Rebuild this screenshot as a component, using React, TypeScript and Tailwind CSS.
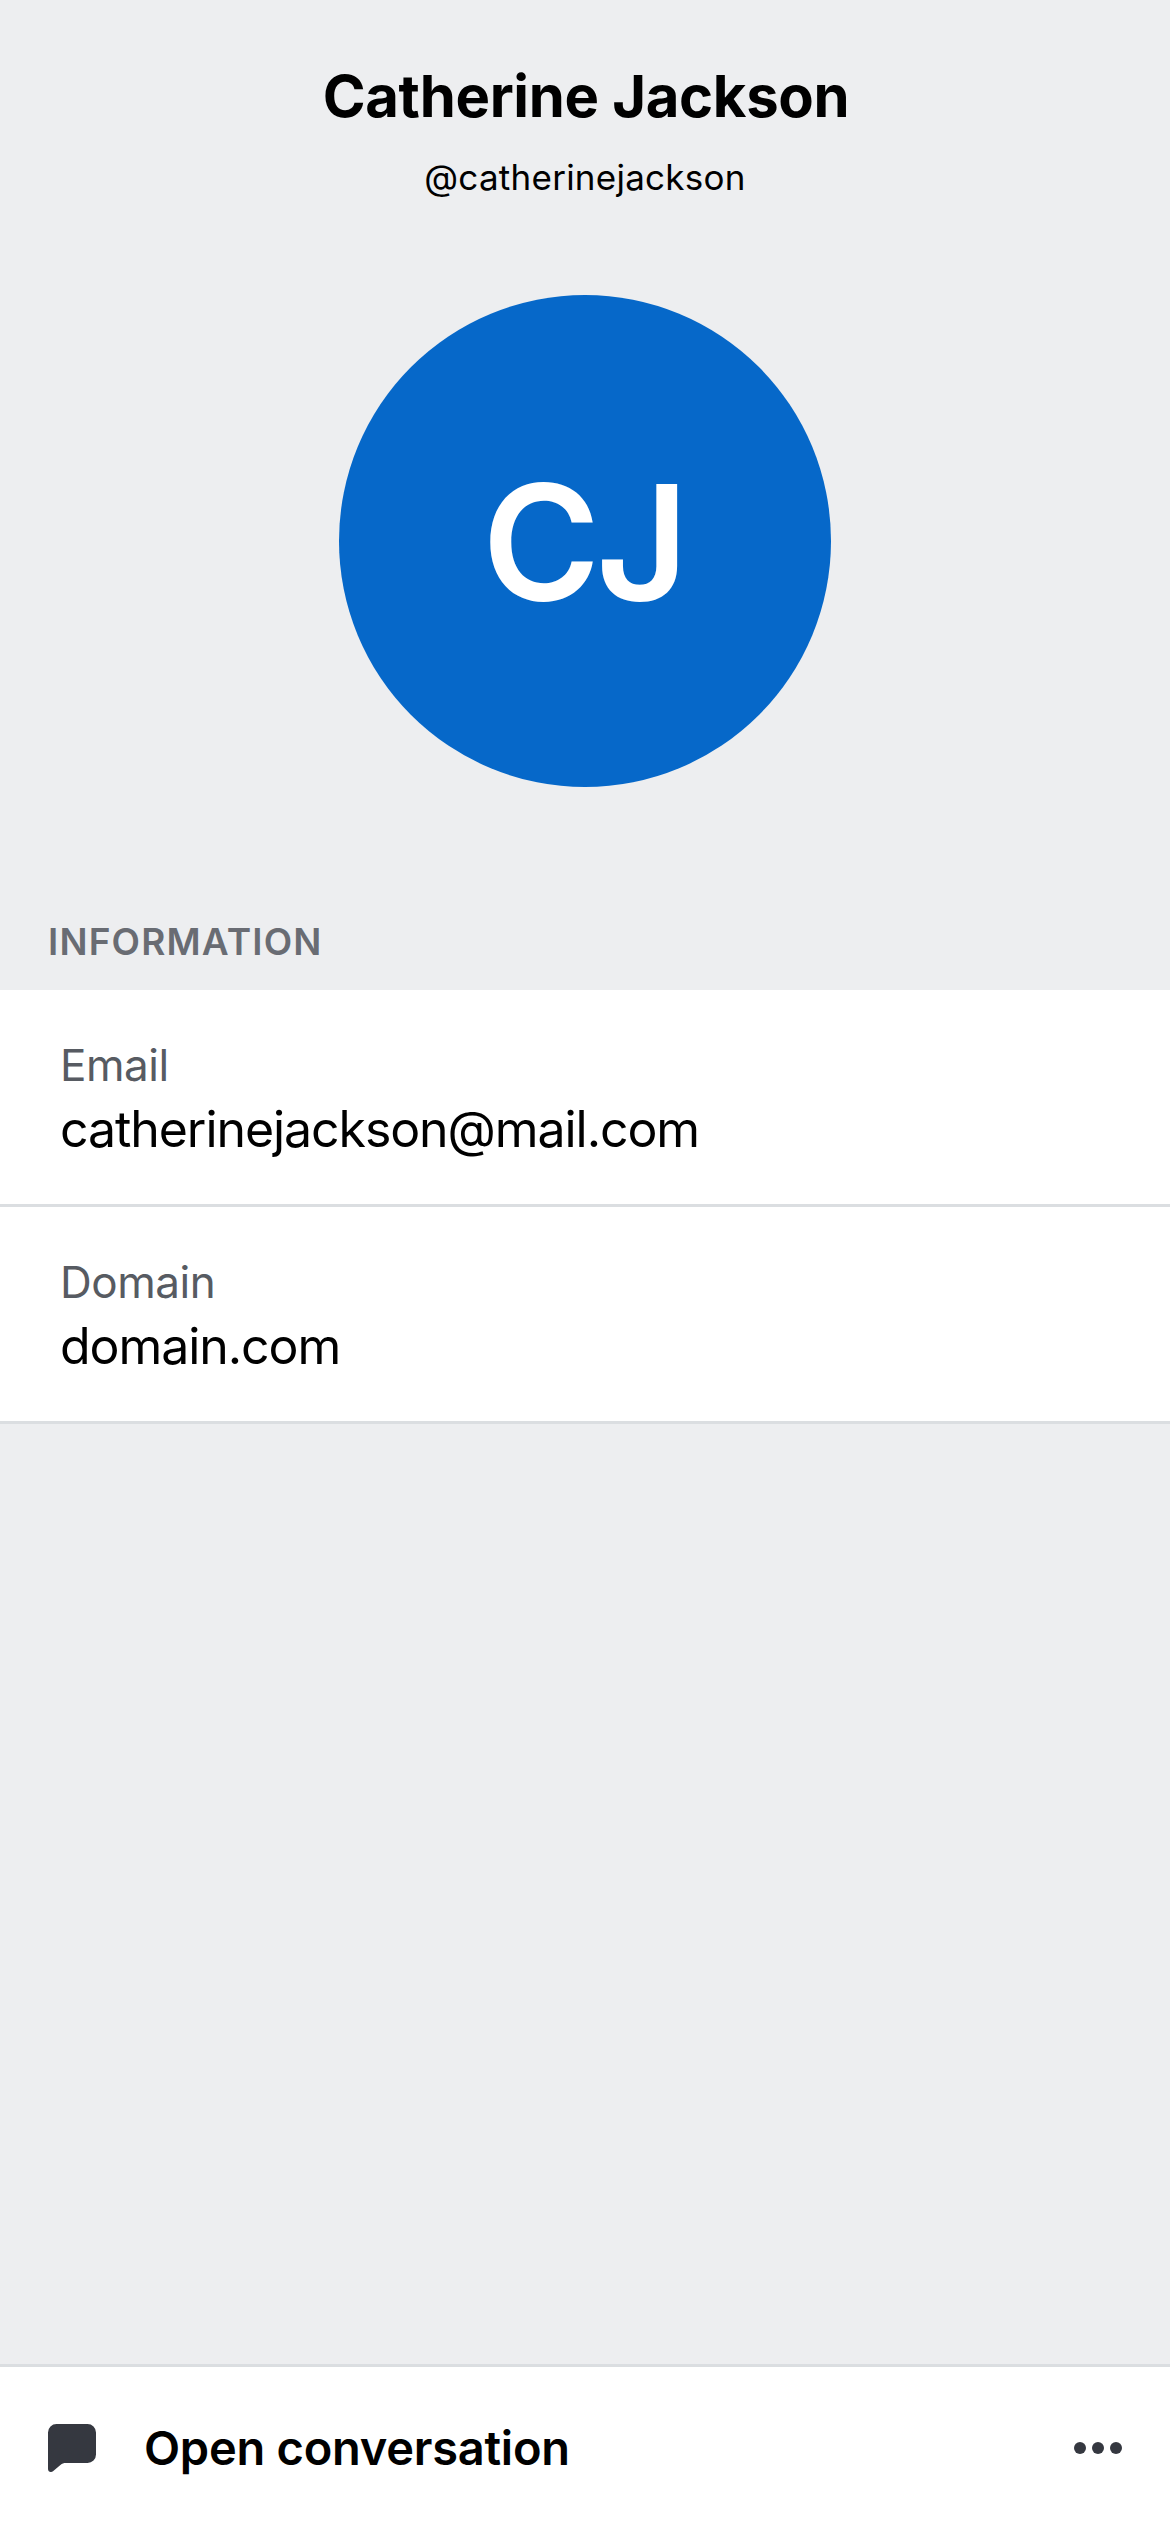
const fields = [
  { label: "Email", value: "catherinejackson@mail.com" },
  { label: "Domain", value: "domain.com" },
];

function ChatIcon() {
  return (
    <svg className="size-12" viewBox="0 0 48 48" fill="#353840">
      <path d="M8.500 0H39.500A8.500 8.500 0 0 1 48 8.500V30.500A8.500 8.500 0 0 1 39.500 39H18C15.500 39 14.300 39.500 12.400 41L5 47.200C3 48.900 0 47.800 0 44.900V8.500A8.500 8.500 0 0 1 8.500 0Z" />
    </svg>
  );
}

function MoreIcon() {
  return (
    <svg className="size-12" viewBox="0 0 48 48" fill="#353840">
      <circle cx="6" cy="24" r="6" />
      <circle cx="24" cy="24" r="6" />
      <circle cx="42" cy="24" r="6" />
    </svg>
  );
}

export default function App() {
  return (
    <div className="flex h-[2532px] w-[1170px] flex-col bg-[#edeef0] font-['Inter',sans-serif] text-black">
      <header className="flex flex-col items-center pt-[60px]">
        <h1 className="pl-[2px] text-[58px] leading-[72px] font-bold tracking-[-0.33px]">Catherine Jackson</h1>
        <p className="mt-[21px] text-[35px] leading-[48px] tracking-[0.25px]">@catherinejackson</p>
        <div className="mt-[94px] flex size-[492px] items-center justify-center rounded-full bg-[#0668c9] pt-[2px] pr-[3px] text-[160px] leading-none font-semibold tracking-[-4px] text-white">
          CJ
        </div>
      </header>
      <h2 className="mt-[131px] px-12 pb-6 text-[37px] leading-[48px] font-semibold tracking-[1.17px] text-[#696c73]">
        INFORMATION
      </h2>
      <dl>
        {fields.map((f) => (
          <div key={f.label} className="h-[217px] border-b-[3px] border-[#dbdee1] bg-white px-[60px] pt-[47px]">
            <dt className="text-[44px] leading-[56px] tracking-[-0.45px] text-[#575b62]">{f.label}</dt>
            <dd className="mt-[3px] text-[50px] leading-[66px] tracking-[-1.07px]">{f.value}</dd>
          </div>
        ))}
      </dl>
      <footer className="mt-auto flex h-[168px] items-center border-t-[3px] border-[#dbdee1] bg-white px-12 pb-[3px]">
        <ChatIcon />
        <span className="ml-12 text-[47px] leading-[60px] font-semibold tracking-[-0.25px]">Open conversation</span>
        <button className="ml-auto" aria-label="More options">
          <MoreIcon />
        </button>
      </footer>
    </div>
  );
}
